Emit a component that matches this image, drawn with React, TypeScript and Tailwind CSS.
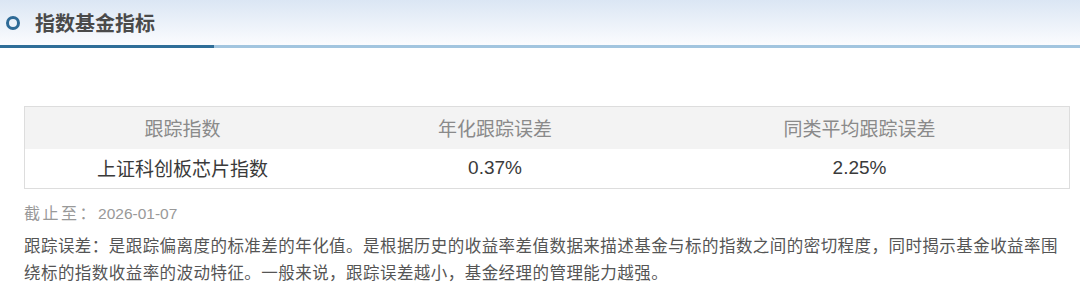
import React from "react";

const cjk = { fontFamily: '"Noto Sans CJK SC", "Noto Sans", sans-serif' };
const num = { fontFamily: '"Liberation Sans", "Noto Sans CJK SC", sans-serif' };

export default function App() {
  return (
    <div className="w-[1080px] h-[298px] bg-white overflow-hidden" style={cjk}>
      <div className="h-[45px] bg-gradient-to-b from-[#dbe6f4] to-[#fbfcfe] flex items-center pl-[6px]">
        <div className="w-[14px] h-[14px] rounded-full border-[3px] border-[#2e6a96]" />
        <div className="ml-[15px] text-[20px] font-bold text-[#4a4a4a] leading-none">指数基金指标</div>
      </div>
      <div className="flex h-[3px]">
        <div className="w-[214px] bg-[#2f6e98]" />
        <div className="flex-1 bg-[#a2c5df]" />
      </div>
      <div className="pl-[24px] pr-[10px] pt-[58px]">
        <div className="border border-[#dddddd]">
          <div className="grid grid-cols-[315px_310px_1fr] h-[42px] bg-[#f3f3f3] text-[19px] text-[#8a8a8a] items-center text-center">
            <div>跟踪指数</div>
            <div>年化跟踪误差</div>
            <div>同类平均跟踪误差</div>
          </div>
          <div className="grid grid-cols-[315px_310px_1fr] h-[39px] text-[19px] text-[#3a3a3a] items-center text-center">
            <div>上证科创板芯片指数</div>
            <div style={num}>0.37%</div>
            <div style={num}>2.25%</div>
          </div>
        </div>
        <div className="mt-[11px] text-[15.5px] text-[#999999] leading-[24px]">
          <span className="text-[16px] tracking-[2.5px]">截止至：</span>
          <span style={num}>2026-01-07</span>
        </div>
        <div className="mt-[6px] text-[16.5px] tracking-[0.45px] text-[#555555] leading-[27px] whitespace-nowrap">
          <div className="w-[1025px] text-justify [text-align-last:justify]">
            跟踪误差：是跟踪偏离度的标准差的年化值。是根据历史的收益率差值数据来描述基金与标的指数之间的密切程度，同时揭示基金收益率围
          </div>
          <div>绕标的指数收益率的波动特征。一般来说，跟踪误差越小，基金经理的管理能力越强。</div>
        </div>
      </div>
    </div>
  );
}
